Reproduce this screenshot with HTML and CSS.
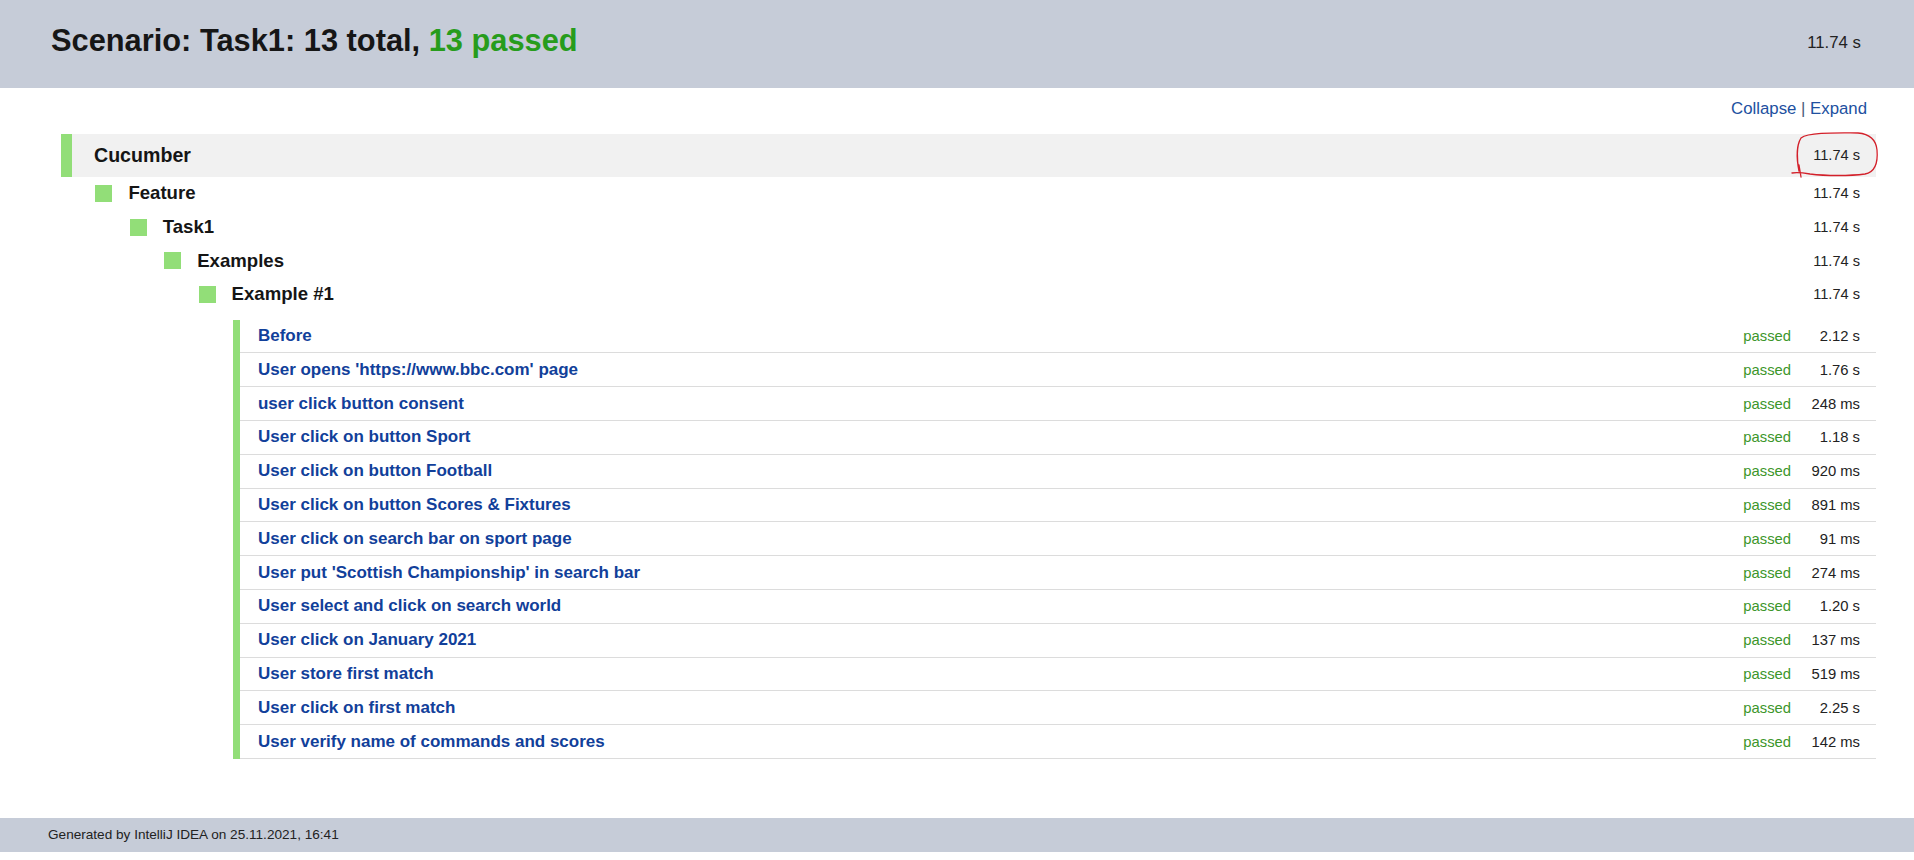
FILE: index.html
```html
<!DOCTYPE html>
<html lang="en">
<head>
<meta charset="utf-8">
<title>Test Results — Task1</title>
<link rel="stylesheet" href="styles.css">
</head>
<body>
<header class="top">
  <h1 class="title">Scenario: Task1: 13 total, <span class="ok">13 passed</span></h1>
  <span class="total-time">11.74 s</span>
</header>

<main class="content">
  <div class="toolbar"><a class="link" href="#">Collapse</a> <span class="sep">|</span> <a class="link" href="#">Expand</a></div>

  <div class="tree">
    <div class="root-row">
      <span class="root-label">Cucumber</span>
      <span class="time root-time">11.74 s</span>
      <svg class="mark" width="92" height="52" viewBox="0 0 92 52">
        <path d="M9,41 C7,31 6,16 11,8 C19,2 48,3 68,3 C80,4 86,10 87,20 C88,32 86,42 75,44 C60,46 36,46 20,44 C14,43 8,42 2,43 M9,35 L11,47" fill="none" stroke="#d3202a" stroke-width="1.3" stroke-linecap="round"/>
      </svg>
    </div>
    <div class="children">
      <div class="node-row"><span class="sq"></span><span class="label">Feature</span><span class="time">11.74 s</span></div>
      <div class="children">
        <div class="node-row"><span class="sq"></span><span class="label">Task1</span><span class="time">11.74 s</span></div>
        <div class="children">
          <div class="node-row"><span class="sq"></span><span class="label">Examples</span><span class="time">11.74 s</span></div>
          <div class="children">
            <div class="node-row"><span class="sq"></span><span class="label">Example #1</span><span class="time">11.74 s</span></div>
            <div class="children">
              <div class="steps">
                <div class="step"><a class="step-name" href="#">Before</a><span class="status">passed</span><span class="dur">2.12 s</span></div>
                <div class="step"><a class="step-name" href="#">User opens 'https://www.bbc.com' page</a><span class="status">passed</span><span class="dur">1.76 s</span></div>
                <div class="step"><a class="step-name" href="#">user click button consent</a><span class="status">passed</span><span class="dur">248 ms</span></div>
                <div class="step"><a class="step-name" href="#">User click on button Sport</a><span class="status">passed</span><span class="dur">1.18 s</span></div>
                <div class="step"><a class="step-name" href="#">User click on button Football</a><span class="status">passed</span><span class="dur">920 ms</span></div>
                <div class="step"><a class="step-name" href="#">User click on button Scores &amp; Fixtures</a><span class="status">passed</span><span class="dur">891 ms</span></div>
                <div class="step"><a class="step-name" href="#">User click on search bar on sport page</a><span class="status">passed</span><span class="dur">91 ms</span></div>
                <div class="step"><a class="step-name" href="#">User put 'Scottish Championship' in search bar</a><span class="status">passed</span><span class="dur">274 ms</span></div>
                <div class="step"><a class="step-name" href="#">User select and click on search world</a><span class="status">passed</span><span class="dur">1.20 s</span></div>
                <div class="step"><a class="step-name" href="#">User click on January 2021</a><span class="status">passed</span><span class="dur">137 ms</span></div>
                <div class="step"><a class="step-name" href="#">User store first match</a><span class="status">passed</span><span class="dur">519 ms</span></div>
                <div class="step"><a class="step-name" href="#">User click on first match</a><span class="status">passed</span><span class="dur">2.25 s</span></div>
                <div class="step"><a class="step-name" href="#">User verify name of commands and scores</a><span class="status">passed</span><span class="dur">142 ms</span></div>
              </div>
            </div>
          </div>
        </div>
      </div>
    </div>
  </div>
</main>

<footer class="foot">Generated by IntelliJ IDEA on 25.11.2021, 16:41</footer>
</body>
</html>
```

FILE: styles.css
```css
html, body {
  margin: 0;
  padding: 0;
  background: #ffffff;
}

body {
  font-family: "Liberation Sans", Arial, sans-serif;
  color: #1a1a1a;
}

.top {
  height: 88px;
  box-sizing: border-box;
  background: #c6ccd8;
  display: flex;
  justify-content: space-between;
  align-items: flex-start;
  padding: 0 53px 0 51px;
}

.title {
  margin: 23px 0 0 0;
  font-size: 30.8px;
  line-height: 35px;
  font-weight: bold;
  color: #161616;
}

.ok {
  color: #279c1c;
}

.total-time {
  margin-top: 33px;
  font-size: 16.8px;
  line-height: 20px;
  color: #222;
}

.content {
  margin: 0 38px 0 61px;
  padding-top: 10.5px;
}

.toolbar {
  text-align: right;
  font-size: 16.8px;
  line-height: 20px;
  padding-right: 9px;
  margin-bottom: 15.8px;
  color: #4a5a78;
}

.link {
  color: #2150a0;
  text-decoration: none;
}

.root-row {
  position: relative;
  height: 42.4px;
  display: flex;
  align-items: center;
  background: #f1f1f1;
  border-left: 11px solid #92de78;
  padding: 0 16px 0 22px;
}

.root-label {
  font-size: 19.6px;
  font-weight: bold;
  color: #151515;
  flex: 1;
}

.time {
  font-size: 14.6px;
  color: #222;
}

.mark {
  position: absolute;
  right: -6px;
  top: -4px;
}

.children {
  padding-left: 34.4px;
}

.node-row {
  height: 33.6px;
  display: flex;
  align-items: center;
  padding-right: 16px;
}

.sq {
  width: 17px;
  height: 17px;
  background: #92de78;
  margin-right: 16px;
  flex: none;
}

.label {
  flex: 1;
  font-size: 18.6px;
  font-weight: bold;
  color: #151515;
}

.steps {
  margin-top: 8.6px;
  border-left: 7px solid #92de78;
}

.step {
  height: 33.8px;
  box-sizing: border-box;
  border-bottom: 1px solid #dcdcdc;
  display: flex;
  align-items: center;
  padding: 0 16px 0 18px;
}

.step-name {
  flex: 1;
  font-size: 17px;
  font-weight: bold;
  color: #11409a;
  text-decoration: none;
}

.status {
  font-size: 14.8px;
  color: #3c962a;
}

.dur {
  width: 60px;
  margin-left: 9px;
  text-align: right;
  font-size: 14.8px;
  color: #222;
}

.foot {
  margin-top: 58.8px;
  margin-bottom: 8px;
  height: 34px;
  display: flex;
  align-items: center;
  padding-left: 48px;
  background: #c6ccd8;
  font-size: 13.6px;
  color: #222;
}
```
